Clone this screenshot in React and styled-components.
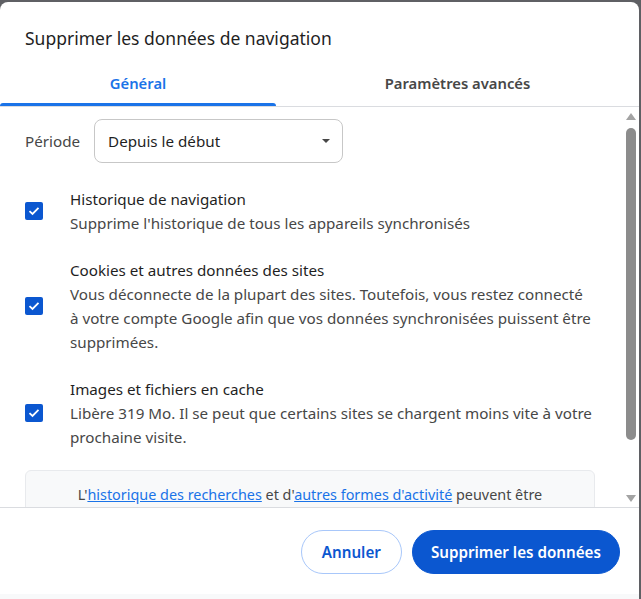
import React from "react"
import styled, { createGlobalStyle } from "styled-components"

const GlobalStyle = createGlobalStyle`
  html, body {
    margin: 0;
    padding: 0;
    background: #5f6064;
  }
  * {
    box-sizing: border-box;
  }
`

const Page = styled.div`
  width: 641px;
  height: 599px;
  padding-top: 2px;
  overflow: hidden;
  font-family: "Noto Sans", "Open Sans", sans-serif;
`

const Dialog = styled.div`
  width: 639px;
  height: 597px;
  background: #ffffff;
  border-radius: 8px 8px 0 0;
  display: flex;
  flex-direction: column;
  overflow: hidden;
`

const Title = styled.h1`
  margin: 0;
  padding: 24px 25px 8px;
  font-size: 17.5px;
  line-height: 24px;
  font-weight: 400;
  color: #1f1f1f;
`

const Tabs = styled.div`
  display: flex;
  height: 49px;
  border-bottom: 1px solid #dadce0;
`

const Tab = styled.div`
  position: relative;
  flex: ${({ active }) => (active ? "0 0 276px" : "1")};
  display: flex;
  align-items: center;
  justify-content: center;
  padding-top: 2px;
  font-size: 14.8px;
  font-weight: 600;
  color: ${({ active }) => (active ? "#1a73e8" : "#474747")};

  &::after {
    content: "";
    display: ${({ active }) => (active ? "block" : "none")};
    position: absolute;
    left: 0;
    right: 0;
    bottom: 0;
    height: 3px;
    background: #1a73e8;
    border-radius: 3px 3px 0 0;
  }
`

const Body = styled.div`
  display: flex;
  height: 400px;
`

const Content = styled.div`
  flex: 1;
  overflow: hidden;
  padding: 12px 27px 0 25px;
`

const PeriodRow = styled.div`
  display: flex;
  align-items: center;
  gap: 14px;
  font-size: 15.2px;
  color: #474747;
`

const Select = styled.div`
  width: 249px;
  height: 44px;
  border: 1px solid #c7c7c7;
  border-radius: 8px;
  display: flex;
  align-items: center;
  justify-content: space-between;
  padding: 0 12px 0 13px;
  font-size: 15.2px;
  color: #1f1f1f;
`

const Caret = styled.span`
  width: 0;
  height: 0;
  border-left: 4px solid transparent;
  border-right: 4px solid transparent;
  border-top: 4px solid #474747;
`

const Items = styled.div`
  display: flex;
  flex-direction: column;
  gap: 23px;
  margin-top: 24px;
`

const Item = styled.div`
  display: flex;
  align-items: center;
`

const Box = styled.span`
  flex: none;
  width: 18px;
  height: 18px;
  margin-right: 27px;
  border-radius: 2px;
  background: #0b57d0;
  display: flex;
  align-items: center;
  justify-content: center;
`

const ItemText = styled.div`
  font-size: 15.2px;
  line-height: 24px;
`

const ItemTitle = styled.div`
  color: #1f1f1f;
`

const ItemDesc = styled.div`
  color: #474747;
`

const Notice = styled.div`
  margin-top: 21px;
  padding: 12px 20px;
  background: #f8f9fa;
  border: 1px solid #e8eaed;
  border-radius: 6px;
  text-align: center;
  font-size: 14.4px;
  line-height: 24px;
  color: #474747;
`

const Link = styled.a`
  color: #1a73e8;
  text-decoration: underline;
`

const Scrollbar = styled.div`
  width: 17px;
  display: flex;
  flex-direction: column;
  align-items: center;
  padding: 6px 0 5px;
`

const Arrow = styled.span`
  width: 0;
  height: 0;
  border-left: 5px solid transparent;
  border-right: 5px solid transparent;
  ${({ down }) =>
    down ? "border-top: 7px solid #a3a3a3;" : "border-bottom: 7px solid #a3a3a3;"}
`

const Track = styled.div`
  flex: 1;
  width: 100%;
  display: flex;
  justify-content: center;
  padding: 8px 0 6px;
`

const Thumb = styled.div`
  width: 10px;
  height: 312px;
  border-radius: 5px;
  background: #8c8c8c;
`

const Footer = styled.div`
  border-top: 1px solid #dadce0;
  display: flex;
  justify-content: flex-end;
  gap: 10px;
  padding: 22px 19px 20px;
`

const Button = styled.button`
  height: 44px;
  padding: 0 ${({ primary }) => (primary ? "18px" : "20px")};
  border-radius: 22px;
  font-family: inherit;
  font-size: 15.2px;
  font-weight: 600;
  cursor: pointer;
  border: 1px solid ${({ primary }) => (primary ? "#0b57d0" : "#a8c7fa")};
  background: ${({ primary }) => (primary ? "#0b57d0" : "#ffffff")};
  color: ${({ primary }) => (primary ? "#ffffff" : "#0b57d0")};
`

const BottomStrip = styled.div`
  flex: 1;
  background: #f8f9fa;
`

const Check = () => (
  <svg width="12" height="10" viewBox="0 0 12 10">
    <path d="M1.5 5.2 L4.5 8 L10.5 1.8" fill="none" stroke="#fff" strokeWidth="1.8" />
  </svg>
)

const items = [
  {
    title: "Historique de navigation",
    desc: ["Supprime l'historique de tous les appareils synchronisés"],
  },
  {
    title: "Cookies et autres données des sites",
    desc: [
      "Vous déconnecte de la plupart des sites. Toutefois, vous restez connecté",
      "à votre compte Google afin que vos données synchronisées puissent être",
      "supprimées.",
    ],
  },
  {
    title: "Images et fichiers en cache",
    desc: [
      "Libère 319 Mo. Il se peut que certains sites se chargent moins vite à votre",
      "prochaine visite.",
    ],
  },
]

export default function App() {
  return (
    <Page>
      <GlobalStyle />
      <Dialog>
        <Title>Supprimer les données de navigation</Title>
        <Tabs>
          <Tab active>Général</Tab>
          <Tab>Paramètres avancés</Tab>
        </Tabs>
        <Body>
          <Content>
            <PeriodRow>
              Période
              <Select>
                Depuis le début
                <Caret />
              </Select>
            </PeriodRow>
            <Items>
              {items.map((item) => (
                <Item key={item.title}>
                  <Box>
                    <Check />
                  </Box>
                  <ItemText>
                    <ItemTitle>{item.title}</ItemTitle>
                    {item.desc.map((line) => (
                      <ItemDesc key={line}>{line}</ItemDesc>
                    ))}
                  </ItemText>
                </Item>
              ))}
            </Items>
            <Notice>
              L'<Link>historique des recherches</Link> et d'
              <Link>autres formes d'activité</Link> peuvent être enregistrés dans
              votre compte Google lorsque vous êtes connecté.
            </Notice>
          </Content>
          <Scrollbar>
            <Arrow />
            <Track>
              <Thumb />
            </Track>
            <Arrow down />
          </Scrollbar>
        </Body>
        <Footer>
          <Button>Annuler</Button>
          <Button primary>Supprimer les données</Button>
        </Footer>
        <BottomStrip />
      </Dialog>
    </Page>
  )
}
